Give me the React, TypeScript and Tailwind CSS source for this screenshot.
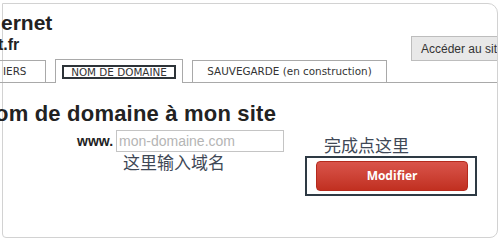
import React from "react";

export default function App() {
  return (
    <div className="w-[500px] h-[240px] overflow-hidden bg-white relative" style={{ fontFamily: '"Liberation Sans", Arial, sans-serif' }}>
      <div className="ml-[2px] mt-[3px] w-[496px] h-[235px] border border-[#d2d2d2] rounded-tr-[10px] rounded-br-[8px] rounded-bl-[4px]">
        <div className="ml-[-3px] w-[497px] overflow-hidden">
          {/* header */}
          <div className="flex justify-between items-start h-[56px]">
            <div className="pt-[7px] text-[#222]">
              <div className="text-[21px] font-bold leading-[24px] ml-[1px]">ernet</div>
              <div className="text-[16px] font-bold leading-[18px] mt-[1px] ml-[-2px]">t.fr</div>
            </div>
            <div className="mt-[32px] h-[25px] w-[86px] bg-[#e8e8e8] border border-r-0 border-[#bdbdbd] flex items-center pl-[9px] overflow-hidden whitespace-nowrap text-[12px] text-[#333] relative z-10">
              Accéder au site
            </div>
          </div>
          {/* tabs */}
          <div className="flex items-end h-[23px] border-b border-[#a9a9a9] text-[10.4px] text-[#333]" style={{ fontFamily: '"DejaVu Sans", sans-serif' }}>
            <div className="w-[46px] h-[22px] border-t border-r border-[#a9a9a9] flex items-center pl-[3px]">IERS</div>
            <div className="ml-[9px] w-[128px] h-[24px] mb-[-1px] bg-white border border-b-0 border-[#a9a9a9] flex items-center justify-center relative">
              <span className="border-[2px] border-[#2d3338] px-[7px] h-[14px] leading-[10px] flex items-center mt-[1px]">NOM DE DOMAINE</span>
            </div>
            <div className="ml-[9px] w-[195px] h-[22px] border border-b-0 border-[#a9a9a9] flex items-center justify-center">SAUVEGARDE (en construction)</div>
          </div>
          {/* heading */}
          <div className="mt-[18px] ml-[-5px] text-[22px] font-bold leading-[26px] tracking-[0.2px] text-[#222] whitespace-nowrap">om de domaine à mon site</div>
          {/* form */}
          <div className="flex mt-[3px]">
            <div className="ml-[77px] flex flex-col">
              <div className="flex items-center h-[22px]">
                <span className="text-[14px] font-bold text-[#222]">www.</span>
                <div className="ml-[3px] w-[168px] h-[22px] border border-[#c4c4c4] flex items-center pl-[2px] text-[14px] text-[#b5b5b5]">mon-domaine.com</div>
              </div>
              <div className="ml-[46px] text-[17px] leading-[20px] text-[#404856]" style={{ fontFamily: '"Noto Sans CJK SC", sans-serif' }}>这里输入域名</div>
            </div>
            <div className="ml-[21px] flex flex-col">
              <div className="ml-[19px] pt-[4px] text-[17px] leading-[22px] text-[#404856]" style={{ fontFamily: '"Noto Sans CJK SC", sans-serif' }}>完成点这里</div>
              <div className="w-[172px] h-[40px] border-[2px] border-[#2e3a44] pt-[3px] pl-[9px]">
                <div className="w-[152px] h-[30px] rounded-[4px] bg-gradient-to-b from-[#d9544a] to-[#c12f20] border border-[#b52a1d] flex items-center justify-center text-white text-[12px] font-bold" style={{ fontFamily: '"Open Sans", sans-serif' }}>
                  Modifier
                </div>
              </div>
            </div>
          </div>
        </div>
      </div>
    </div>
  );
}
